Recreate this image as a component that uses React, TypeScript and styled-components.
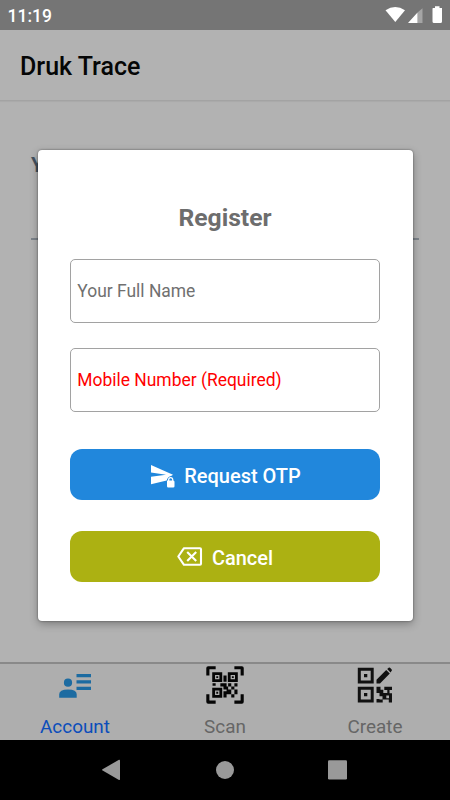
import React from 'react';
import styled, { createGlobalStyle } from 'styled-components';

const GlobalStyle = createGlobalStyle`
  * { box-sizing: border-box; }
  body { margin: 0; background: #b2b2b2; font-family: Roboto, sans-serif; }
  button, input { font-family: inherit; }
`;

const Screen = styled.div`
  position: relative;
  width: 450px;
  height: 800px;
  display: flex;
  flex-direction: column;
  overflow: hidden;
  background: #b2b2b2;
`;

const StatusBar = styled.div`
  height: 30px;
  flex: none;
  display: flex;
  align-items: center;
  justify-content: space-between;
  padding: 2px 7px 0 7.5px;
  background: #757575;
  color: #fff;
  font-size: 17.5px;
  font-weight: 500;
`;

const StatusIcons = styled.svg`
  display: block;
  width: 60px;
  height: 20px;
`;

const Header = styled.header`
  height: 71px;
  flex: none;
  display: flex;
  align-items: center;
  padding: 3px 20px 0;
  border-bottom: 1px solid #a3a3a3;
  box-shadow: 0 1px 1px #aaa;
  color: #050606;
  font-size: 25px;
  font-weight: 500;
`;

const Content = styled.main`
  flex: 1;
  padding: 50px 31px 0;
`;

const BackField = styled.div`
  height: 89px;
  border-bottom: 2px solid #7c838a;
  color: #43515f;
  font-size: 20px;
  font-weight: 700;
  line-height: 28px;
`;

const TabBar = styled.nav`
  height: 78px;
  flex: none;
  display: grid;
  grid-template-columns: repeat(3, 1fr);
  border-top: 2px solid #898989;
  background: #aeaeae;
`;

const Tab = styled.div<{ $active?: boolean }>`
  display: flex;
  flex-direction: column;
  align-items: center;
  color: ${(p) => (p.$active ? '#0b4dbb' : '#666')};
  font-size: 18.9px;
  line-height: 24px;
`;

const TabIcon = styled.svg`
  width: 40px;
  height: 40px;
  margin: 1px 0 10px;
  flex: none;
`;

const NavBar = styled.div`
  height: 60px;
  flex: none;
  background: #000;
`;

const NavIcons = styled.svg`
  display: block;
  width: 450px;
  height: 60px;
`;

const Dialog = styled.form`
  position: absolute;
  left: 37.5px;
  top: 150px;
  width: 375px;
  height: 470.5px;
  padding: 50px 32.5px 0;
  display: flex;
  flex-direction: column;
  background: #fff;
  border-radius: 4px;
  box-shadow: 0 0 2px rgba(0, 0, 0, 0.5), 0 3px 8px rgba(0, 0, 0, 0.3);
`;

const Title = styled.h1`
  margin: 0 0 24px;
  height: 35px;
  color: #6d6d6d;
  font-size: 24.7px;
  line-height: 36px;
  font-weight: 700;
  text-align: center;
`;

const Field = styled.input<{ $required?: boolean }>`
  width: 310px;
  height: 64px;
  margin-bottom: 24.5px;
  padding: ${(p) => (p.$required ? '1px 7px 0 6.3px' : '0 7px 1px 6.3px')};
  flex: none;
  border: 1px solid #a2a2a2;
  border-radius: 5px;
  outline: none;
  background: #fff;
  font-size: 17.45px;
  &::placeholder {
    color: ${(p) => (p.$required ? '#ff0000' : '#707070')};
    opacity: 1;
  }
`;

const Action = styled.button<{ $color: string; $top: number }>`
  width: 310px;
  height: 50.5px;
  margin-top: ${(p) => p.$top}px;
  padding: 3px 0 0;
  flex: none;
  display: flex;
  align-items: center;
  justify-content: center;
  gap: 8px;
  border: 0;
  border-radius: 12px;
  background: ${(p) => p.$color};
  color: #fff;
  font-size: 20px;
  font-weight: 500;
`;

const ActionIcon = styled.svg`
  width: 27px;
  height: 27px;
  flex: none;
`;

export default function App() {
  return (
    <>
      <GlobalStyle />
      <Screen>
        <StatusBar>
          <span>11:19</span>
          <StatusIcons viewBox="383 6 60 20" fill="#fff">
            <path d="M385.5 10.3Q395.3 3.8 405 10.3L395.3 22Z" />
            <path d="M417.5 12V23H408L417.5 12.4Z" />
            <path d="M417.5 12.4L422.5 8.2V23H417.5Z" opacity=".35" />
            <path d="M433 8H435V6.2H439.5V8H442V21.5Q442 23 440.5 23H434Q432.5 23 432.5 21.5V8.5Z" />
          </StatusIcons>
        </StatusBar>
        <Header>Druk Trace</Header>
        <Content>
          <BackField>Your Full Name</BackField>
        </Content>
        <TabBar>
          <Tab $active>
            <TabIcon viewBox="55 665 40 40" fill="#1c6ba1">
              <path d="M76.5 674H91V677.2H76.5ZM76.5 680.3H91V683.5H76.5ZM76.5 686.7H91V689.9H76.5Z" />
              <circle cx="68" cy="682.7" r="4.1" />
              <path d="M59.2 697.7V694.3Q59.2 689.5 68 689.5T76.7 694.3V697.7Z" />
            </TabIcon>
            Account
          </Tab>
          <Tab>
            <TabIcon viewBox="205 665 40 40">
              <g transform="translate(206.3 666.2) scale(1.56)" fill="#050505">
                <path fillRule="evenodd" d="M3.8 3.8H10.2V10.2H3.8ZM5.6 5.6V8.4H8.4V5.6ZM13.8 3.8H20.2V10.2H13.8ZM15.6 5.6V8.4H18.4V5.6ZM3.8 13.8H10.2V20.2H3.8ZM5.6 15.6V18.4H8.4V15.6Z" />
                <path d="M6.4 6.4H7.6V7.6H6.4ZM16.4 6.4H17.6V7.6H16.4ZM6.4 16.4H7.6V17.6H6.4ZM11 6H13V10H11ZM4 11H6V12.5H4ZM9 11H13V15H11V13H9ZM14 11H16V13H14ZM18 11H20V13H18ZM16 13H18V15H16ZM14 13V15H16V18H13V20H11V16H13V13ZM18 15H20V18H18ZM16 18H18V20H16Z" />
                <path d="M2 2V6H0V1.2Q0 0 1.2 0H6V2ZM18 0H22.8Q24 0 24 1.2V6H22V2H18ZM2 18V22H6V24H1.2Q0 24 0 22.8V18ZM22 22V18H24V22.8Q24 24 22.8 24H18V22Z" />
              </g>
            </TabIcon>
            Scan
          </Tab>
          <Tab>
            <TabIcon viewBox="355 665 40 40" fill="#111">
              <path fillRule="evenodd" d="M357.8 667.8H373.7V683.5H357.8ZM360.8 670.8V680.5H370.7V670.8ZM357.8 686.7H373.7V702.4H357.8ZM360.8 689.7V699.4H370.7V689.7Z" />
              <path d="M364 674H367.3V677.3H364ZM364 692.9H367.3V696.2H364ZM376.5 683.5V679.7L386.2 670L389.8 673.6L380 683.5ZM387.2 669L389 667.6Q389.7 667.3 390.3 667.9L391.7 669.4Q392.2 670 391.7 670.7L390.5 672.6Z" />
              <path d="M376.5 686.7H380.5V689.7H383.3V693H387.3V690H384.3V686.7H392V690H389.5V693.2H392V702.4H388.8V699.5H382.7V702.4H379.5V699.5H382.5V696.2H379.5V693H376.5ZM386.3 695.5V698.3H389V695.5ZM376.5 699H379.5V702.4H376.5Z" fillRule="evenodd" />
            </TabIcon>
            Create
          </Tab>
        </TabBar>
        <NavBar>
          <NavIcons viewBox="0 740 450 60" fill="#999">
            <path d="M102.2 770.3Q101.8 769.7 102.5 769.2L119 759.8Q120 759.6 120 760.5V779.3Q120 780.3 119 779.9Z" />
            <circle cx="225" cy="770" r="9" />
            <rect x="328" y="760.2" width="19" height="19.2" rx="1.2" />
          </NavIcons>
        </NavBar>
        <Dialog>
          <Title>Register</Title>
          <Field placeholder="Your Full Name" />
          <Field $required placeholder="Mobile Number (Required)" />
          <Action type="button" $color="#2187dc" $top={13}>
            <ActionIcon viewBox="149 462 27 27" fill="#fff">
              <path d="M151 465L173 474.7L171.5 475.8Q167.2 477 166.7 480.6L151 484.3V476.8L166 474.7L151 472.6Z" />
              <path fillRule="evenodd" d="M167.2 480.4H168V479.8Q168 476.9 170.7 476.9T173.4 479.8V480.4Q174.5 480.6 174.5 481.7V486.2Q174.5 487.5 173.2 487.5H168.3Q167 487.5 167 486.2V481.2Q167 480.4 167.2 480.4ZM169.3 480.4H172.1V479.7Q172.1 478.2 170.7 478.2T169.3 479.7Z" />
            </ActionIcon>
            Request OTP
          </Action>
          <Action type="button" $color="#acb112" $top={31.5}>
            <ActionIcon viewBox="177 544.5 27 27" fill="none" stroke="#fff" strokeWidth="2.1" strokeLinejoin="round">
              <path d="M184 548.7H200Q201 548.7 201 549.7V564.3Q201 565.3 200 565.3H184L178.3 557Z" />
              <path d="M187.2 552.5L196.2 561.5M196.2 552.5L187.2 561.5" />
            </ActionIcon>
            Cancel
          </Action>
        </Dialog>
      </Screen>
    </>
  );
}
